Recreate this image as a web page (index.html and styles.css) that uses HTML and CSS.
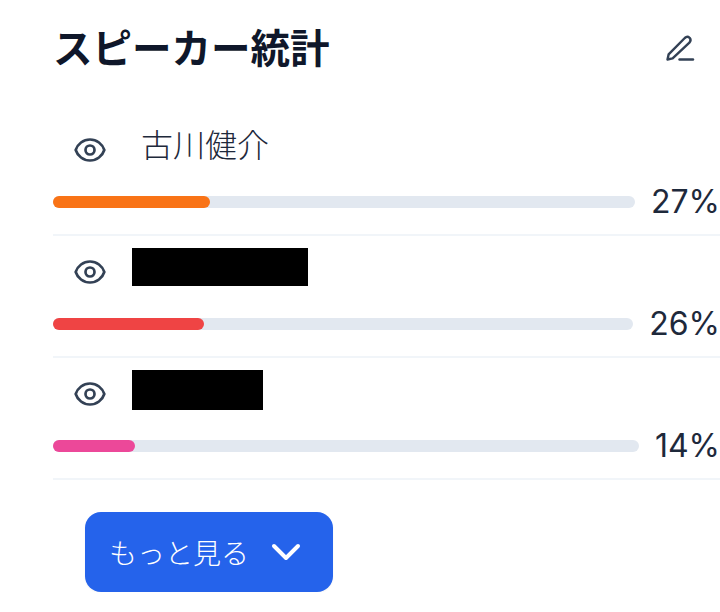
FILE: index.html
```html
<!DOCTYPE html>
<html lang="ja">
<head>
    <meta charset="UTF-8">
    <meta name="viewport" content="width=device-width, initial-scale=1.0">
    <title>スピーカー統計</title>
    <link rel="stylesheet" href="styles.css">
</head>
<body>
    <div class="card">
        <div class="card-header">
            <h2 class="card-title">スピーカー統計</h2>
            <button class="edit-button" type="button" aria-label="編集">
                <svg viewBox="0 0 30 30" width="30" height="30" fill="none" stroke="currentColor" stroke-width="2.4" stroke-linecap="round" stroke-linejoin="round">
                    <path d="M2.5 26.5 L3.6 21.4 L19.8 5 Q22.2 2.8 24.6 4.8 Q26.6 7.2 24.4 9.6 L7.6 25.4 Z"/>
                    <path d="M14.5 26.5 H28"/>
                </svg>
            </button>
        </div>

        <div class="speaker">
            <div class="speaker-head">
                <svg class="eye" viewBox="0 0 24 24" fill="none" stroke="currentColor" stroke-width="1.8" stroke-linecap="round" stroke-linejoin="round">
                    <path d="M15 12a3 3 0 11-6 0 3 3 0 016 0z"/>
                    <path d="M2.458 12C3.732 7.943 7.523 5 12 5c4.478 0 8.268 2.943 9.542 7-1.274 4.057-5.064 7-9.542 7-4.477 0-8.268-2.943-9.542-7z"/>
                </svg>
                <span class="speaker-name">古川健介</span>
            </div>
            <div class="meter">
                <div class="bar"><div class="bar-fill orange" style="width: 27%"></div></div>
                <span class="percent">27%</span>
            </div>
        </div>

        <div class="speaker">
            <div class="speaker-head">
                <svg class="eye" viewBox="0 0 24 24" fill="none" stroke="currentColor" stroke-width="1.8" stroke-linecap="round" stroke-linejoin="round">
                    <path d="M15 12a3 3 0 11-6 0 3 3 0 016 0z"/>
                    <path d="M2.458 12C3.732 7.943 7.523 5 12 5c4.478 0 8.268 2.943 9.542 7-1.274 4.057-5.064 7-9.542 7-4.477 0-8.268-2.943-9.542-7z"/>
                </svg>
                <div class="redacted redacted-long"></div>
            </div>
            <div class="meter">
                <div class="bar"><div class="bar-fill red" style="width: 26%"></div></div>
                <span class="percent">26%</span>
            </div>
        </div>

        <div class="speaker">
            <div class="speaker-head">
                <svg class="eye" viewBox="0 0 24 24" fill="none" stroke="currentColor" stroke-width="1.8" stroke-linecap="round" stroke-linejoin="round">
                    <path d="M15 12a3 3 0 11-6 0 3 3 0 016 0z"/>
                    <path d="M2.458 12C3.732 7.943 7.523 5 12 5c4.478 0 8.268 2.943 9.542 7-1.274 4.057-5.064 7-9.542 7-4.477 0-8.268-2.943-9.542-7z"/>
                </svg>
                <div class="redacted redacted-short"></div>
            </div>
            <div class="meter">
                <div class="bar"><div class="bar-fill pink" style="width: 14%"></div></div>
                <span class="percent">14%</span>
            </div>
        </div>

        <button class="more-button" type="button">
            <span>もっと見る</span>
            <svg viewBox="0 0 30 18" width="30" height="18" fill="none" stroke="currentColor" stroke-width="4" stroke-linecap="round" stroke-linejoin="round">
                <path d="M3 3 L15 15 L27 3"/>
            </svg>
        </button>
    </div>
</body>
</html>
```

FILE: styles.css
```css
body {
    font-family: Inter, "Noto Sans CJK JP", sans-serif;
    margin: 0;
    background-color: white;
    color: #1e293b;
}
.card {
    padding-left: 53px;
}
.card-header {
    display: flex;
    justify-content: space-between;
    align-items: center;
    height: 114px;
    padding-bottom: 18px;
    box-sizing: border-box;
}
.card-title {
    margin: 1px 0 0;
    font-size: 39.5px;
    line-height: 48px;
    font-weight: 700;
    color: #0f172a;
}
.edit-button {
    border: none;
    background: none;
    padding: 0;
    margin-right: 25px;
    display: flex;
    color: #334155;
}
.speaker {
    padding: 12px 0 10px;
    border-bottom: 2px solid #f1f5f9;
}
.speaker-head {
    display: flex;
    align-items: flex-start;
    height: 48px;
    margin-bottom: 6px;
}
.eye {
    width: 36px;
    height: 36px;
    margin: 6px 24.5px 0 18.5px;
    flex-shrink: 0;
    color: #334155;
}
.speaker-name {
    margin-left: 9px;
    font-size: 32px;
    line-height: 40px;
    font-weight: 300;
    color: #1e293b;
}
.redacted {
    background: black;
}
.redacted-long {
    width: 176px;
    height: 38px;
}
.redacted-short {
    width: 131px;
    height: 40px;
}
.meter {
    display: flex;
    align-items: center;
    gap: 16px;
    height: 44px;
}
.bar {
    flex: 1;
    height: 12px;
    border-radius: 6px;
    background: #e2e8f0;
}
.bar-fill {
    height: 100%;
    border-radius: 6px;
}
.bar-fill.orange {
    background: #f97316;
}
.bar-fill.red {
    background: #ef4444;
}
.bar-fill.pink {
    background: #ec4899;
}
.percent {
    font-size: 32px;
    line-height: 44px;
    color: #1e293b;
}
.more-button {
    display: flex;
    align-items: center;
    justify-content: center;
    gap: 22px;
    width: 248px;
    height: 80px;
    margin: 32px 0 0 32px;
    padding: 0 8px 0 0;
    border: none;
    border-radius: 16px;
    background: #2563eb;
    color: white;
    font-family: inherit;
    font-size: 28px;
    font-weight: 300;
    box-shadow: 0 1px 2px rgba(0,0,0,0.05);
}
```
